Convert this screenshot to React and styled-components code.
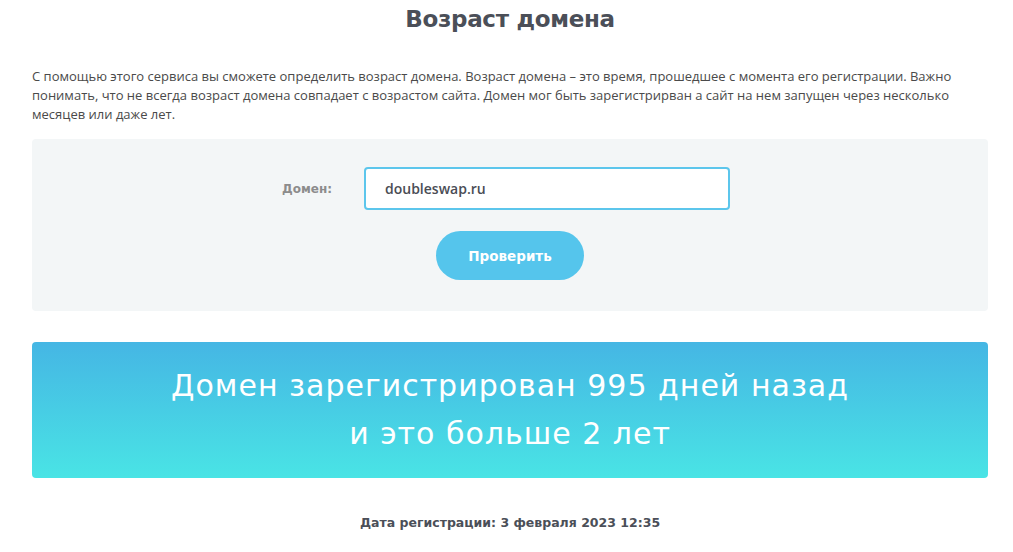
import styled, { createGlobalStyle } from 'styled-components';

const GlobalStyle = createGlobalStyle`
  body {
    margin: 0;
    background: #ffffff;
    font-family: "DejaVu Sans", "Noto Sans", sans-serif;
  }
`;

const Page = styled.div`
  width: 956px;
  margin-left: 32px;
  padding-top: 4px;
`;

const Title = styled.h1`
  margin: 0;
  text-align: center;
  font-family: "DejaVu Sans", sans-serif;
  font-size: 23px;
  font-weight: bold;
  letter-spacing: -0.3px;
  color: #4b4f58;
  line-height: 30px;
`;

const Intro = styled.p`
  margin: 33px 0 15px;
  font-family: "Open Sans", sans-serif;
  font-size: 13px;
  line-height: 19px;
  color: #4a4a4a;
`;

const FormPanel = styled.form`
  background: #f3f6f7;
  border-radius: 4px;
  height: 172px;
  padding-top: 28px;
  box-sizing: border-box;
  display: flex;
  flex-direction: column;
  align-items: center;
`;

const FieldRow = styled.div`
  display: flex;
  align-items: center;
  align-self: stretch;
`;

const Label = styled.label`
  width: 332px;
  text-align: right;
  padding-right: 32px;
  box-sizing: border-box;
  font-family: "DejaVu Sans", sans-serif;
  font-size: 12px;
  font-weight: bold;
  color: #8c8c8c;
`;

const Input = styled.input`
  width: 366px;
  height: 43px;
  box-sizing: border-box;
  border: 2px solid #5cc6ec;
  border-radius: 4px;
  padding: 0 19px;
  background: #ffffff;
  font-family: "Open Sans", sans-serif;
  font-size: 14px;
  font-weight: 600;
  color: #4a4d55;
  outline: none;
`;

const SubmitButton = styled.button`
  margin-top: 21px;
  width: 148px;
  height: 49px;
  border: none;
  border-radius: 25px;
  background: #55c5ec;
  color: #ffffff;
  font-family: "DejaVu Sans", sans-serif;
  font-size: 13.5px;
  font-weight: bold;
  cursor: pointer;
`;

const ResultBox = styled.div`
  margin-top: 31px;
  height: 136px;
  border-radius: 4px;
  background: linear-gradient(180deg, #45b6e4 0%, #49e4e5 100%);
  display: flex;
  flex-direction: column;
  justify-content: center;
  align-items: center;
  color: #ffffff;
  font-family: "DejaVu Sans", sans-serif;
  font-weight: 400;
  font-size: 30px;
  letter-spacing: 1px;
  line-height: 48px;
  text-align: center;
`;

const RegDate = styled.div`
  margin-top: 37px;
  text-align: center;
  font-family: "DejaVu Sans", sans-serif;
  font-size: 12.5px;
  font-weight: bold;
  color: #4b4f58;
`;

export default function App() {
  return (
    <>
      <GlobalStyle />
      <Page>
        <Title>Возраст домена</Title>
        <Intro>
          С помощью этого сервиса вы сможете определить возраст домена. Возраст домена – это время, прошедшее с момента его регистрации. Важно понимать, что не всегда возраст домена совпадает с возрастом сайта. Домен мог быть зарегистрирван а сайт на нем запущен через несколько месяцев или даже лет.
        </Intro>
        <FormPanel onSubmit={(e) => e.preventDefault()}>
          <FieldRow>
            <Label htmlFor="domain">Домен:</Label>
            <Input id="domain" defaultValue="doubleswap.ru" />
          </FieldRow>
          <SubmitButton type="submit">Проверить</SubmitButton>
        </FormPanel>
        <ResultBox>
          <div>Домен зарегистрирован 995 дней назад</div>
          <div>и это больше 2 лет</div>
        </ResultBox>
        <RegDate>Дата регистрации: 3 февраля 2023 12:35</RegDate>
      </Page>
    </>
  );
}
